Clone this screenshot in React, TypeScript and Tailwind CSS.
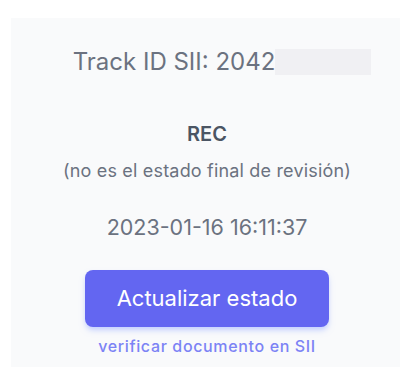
export default function App() {
  return (
    <div className="w-[400px] h-[378px] bg-white pt-[18px] pl-[11px] font-['Inter',sans-serif]">
      <div className="w-[392px] h-[349px] bg-[#f9fafb] flex flex-col items-center pt-[28px]">
        <div className="flex items-center pl-[30px] text-[24px] leading-8 text-[#6b7280]">
          <span>Track ID SII: 2042</span>
          <span className="inline-block w-[96px] h-[26px] bg-[#f0f0f3]" />
        </div>
        <p className="mt-[42px] text-[20px] leading-7 font-semibold text-[#4b5563]">REC</p>
        <p className="mt-[11px] text-[18px] leading-6 tracking-[0.01em] text-[#6b7280]">
          (no es el estado final de revisión)
        </p>
        <p className="mt-[28px] text-[21.5px] leading-8 text-[#6b7280]">2023-01-16 16:11:37</p>
        <button className="mt-[27px] w-[244px] h-[57px] rounded-lg bg-[#6366f1] text-white text-[22px] shadow-md shadow-indigo-200">
          Actualizar estado
        </button>
        <a href="#" className="mt-[9px] text-[16px] leading-5 font-medium tracking-[0.04em] text-[#7c83f5]">
          verificar documento en SII
        </a>
      </div>
    </div>
  )
}
